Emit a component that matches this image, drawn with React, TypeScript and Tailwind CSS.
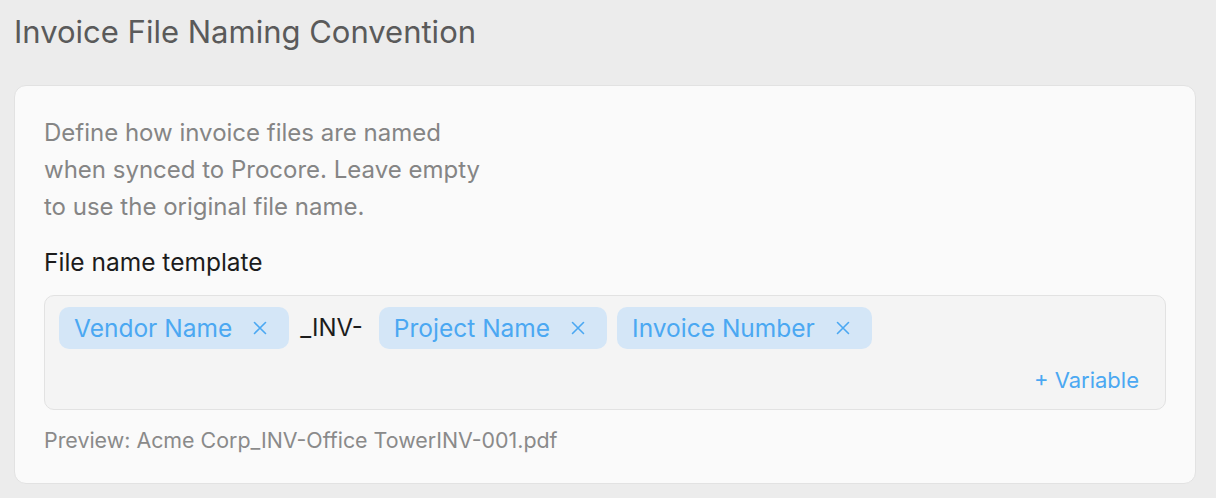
const font = { fontFamily: "Inter, 'Noto Sans', sans-serif" };

function Cross() {
  return (
    <svg width="14" height="14" viewBox="0 0 14 14" fill="none" stroke="currentColor" strokeWidth="1.6" strokeLinecap="round">
      <path d="M1.5 1.5l11 11M12.5 1.5l-11 11" />
    </svg>
  );
}

function Chip({ label }: { label: string }) {
  return (
    <span className="inline-flex h-[42px] items-center gap-[21px] rounded-[10px] bg-[#d4e6f7] pl-[15px] pr-[22px] text-[24.5px] text-[#4ba8f2]">
      {label}
      <Cross />
    </span>
  );
}

export default function App() {
  return (
    <div className="h-[498px] w-[1216px] bg-[#ececec] px-[14px] pt-[14px]" style={font}>
      <h1 className="text-[31px] leading-[36px] font-normal text-[#5a5a5a]">Invoice File Naming Convention</h1>

      <div className="mt-[35px] w-[1182px] rounded-[12px] border border-[#e2e2e2] bg-[#fafafa] px-[29px] pt-[28px] pb-[30px]">
        <p className="max-w-[452px] text-[24px] leading-[37px] text-[#858585]">
          Define how invoice files are named when synced to Procore. Leave empty to use the original file name.
        </p>

        <div className="mt-[22px] text-[24.5px] leading-[30px] text-[#1c1c1c]">File name template</div>

        <div className="mt-[18px] rounded-[10px] border border-[#e2e2e2] bg-[#f4f4f4] px-[14px] pt-[11px] pb-[16px]">
          <div className="flex flex-wrap items-center gap-[10px]">
            <Chip label="Vendor Name" />
            <span className="ml-[1px] mr-[6px] text-[24px] text-[#1c1c1c]">_INV-</span>
            <Chip label="Project Name" />
            <Chip label="Invoice Number" />
          </div>
          <div className="mt-[18px] flex justify-end pr-[12px]">
            <button className="text-[22px] leading-[26px] text-[#4ba8f2]">+ Variable</button>
          </div>
        </div>

        <div className="mt-[17px] text-[21.4px] leading-[26px] text-[#8a8a8a]">Preview: Acme Corp_INV-Office TowerINV-001.pdf</div>
      </div>
    </div>
  );
}
